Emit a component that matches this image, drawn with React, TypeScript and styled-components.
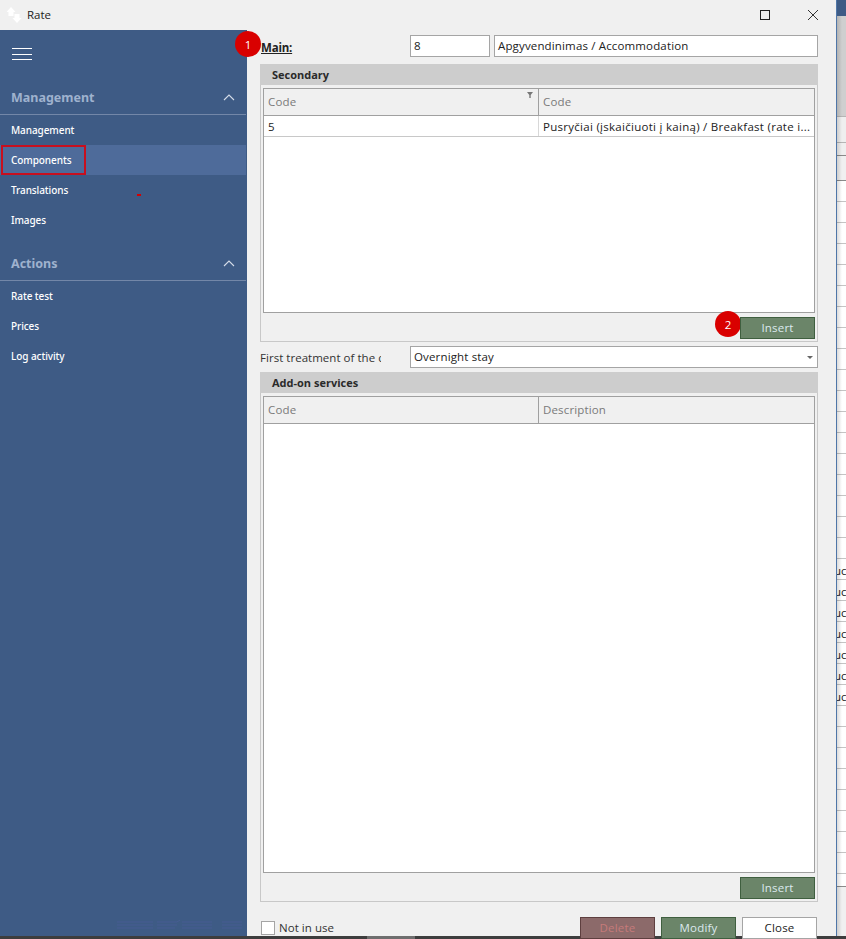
import React from 'react';
import styled, { createGlobalStyle } from 'styled-components';

const Global = createGlobalStyle`
  html, body { margin: 0; padding: 0; background: #f0f0f0; }
  body { font-family: "Open Sans", "Noto Sans", sans-serif; overflow: hidden; }
  * { box-sizing: border-box; }
`;

const Screen = styled.div`
  width: 846px; height: 939px; display: flex; flex-direction: column; overflow: hidden;
`;
const Desktop = styled.div`
  flex: 1; min-height: 0; display: flex;
`;
const Taskbar = styled.div`
  height: 3px; background: #3d3d3d; padding-left: 367px;
`;
const TaskbarThumb = styled.div`
  width: 48px; height: 3px; background: #6e6e6e;
`;
const Dialog = styled.div`
  width: 836px; display: flex; flex-direction: column; background: #f0f0f0;
`;
const TitleBar = styled.div`
  height: 30px; display: flex; align-items: center; padding: 0 0 1px 6px; background: #f0f0f0;
`;
const TitleText = styled.span`
  font-size: 11.5px; color: #222; margin-left: 5px; flex: 1;
`;
const WinButton = styled.button`
  width: 10px; height: 10px; padding: 0; border: 0; background: none; display: block; margin-right: ${p => p.$mr}px;
  svg { display: block; }
`;
const Body = styled.div`
  flex: 1; min-height: 0; display: flex;
`;
const Sidebar = styled.nav`
  position: relative; width: 247px; background: #3e5b85; display: flex; flex-direction: column; flex: none;
  font-family: "Noto Sans", sans-serif;
`;
const Burger = styled.div`
  height: 46px; padding: 18px 0 0 12px; display: flex; flex-direction: column; gap: 4.5px;
  i { display: block; width: 20px; height: 1px; background: #fff; }
`;
const SectionHead = styled.div`
  height: 39px; margin-top: ${p => p.$mt}px; width: 246px; padding: 5px 11px 0 11px; display: flex; align-items: center; justify-content: space-between;
  border-bottom: 1px solid #7387a8; color: #9fb2ce; font-size: 12.5px; font-weight: 700;
`;
const Item = styled.div`
  position: relative; width: 246px; height: 30px; padding: 0 0 1px 11px; display: flex; align-items: center;
  font-size: 10px; font-weight: 500; color: #fff; letter-spacing: -0.08px; background: ${p => (p.$active ? '#4e6b9a' : 'transparent')};
`;
const Highlight = styled.span`
  position: absolute; left: 1px; top: 0; width: 85px; height: 30px; border: 2px solid #c80f1e;
`;
const RedTick = styled.span`
  position: absolute; left: 137px; top: 19px; width: 4px; height: 2px; background: #d40000;
`;
const Watermark = styled.svg`
  position: absolute; left: 116px; bottom: 5px; opacity: .8;
`;
const Main = styled.main`
  position: relative; flex: 1; min-width: 0; display: flex; flex-direction: column; padding: 5px 18px 0 13px; font-size: 11.5px; letter-spacing: .15px; color: #222;
`;
const Badge = styled.span`
  position: absolute; left: ${p => p.$x}px; top: ${p => p.$y}px; width: 26px; height: 26px; border-radius: 50%;
  background: #d90000; color: #fff; font-size: 11.5px; display: flex; align-items: center; justify-content: center;
`;
const FieldRow = styled.div`
  display: flex; align-items: center; height: 22px; margin-top: ${p => p.$mt || 0}px;
`;
const MainLabel = styled.span`
  width: 149px; font-weight: 700; text-decoration: underline; margin: 2px 0 0 1px; font-size: 11.5px; letter-spacing: -.2px;
`;
const ClipLabel = styled.span`
  width: 121px; margin-right: 29px; white-space: nowrap; overflow: hidden; color: #333; letter-spacing: .03px;
`;
const Input = styled.div`
  height: 22px; width: ${p => (p.$w ? p.$w + 'px' : 'auto')}; flex: ${p => (p.$w ? 'none' : '1')}; margin-right: ${p => p.$mr || 0}px;
  background: #fff; border: 1px solid #a5a5a5; padding: 0 3px 1px; display: flex; align-items: center; justify-content: space-between; color: #222;
`;
const Caret = styled.span`
  width: 0; height: 0; border-left: 3px solid transparent; border-right: 3px solid transparent; border-top: 3px solid #666; margin: 1px 1px 0 0;
`;
const Group = styled.section`
  display: flex; flex-direction: column; flex: ${p => (p.$fill ? '1' : 'none')}; height: ${p => p.$h}px; border: 1px solid #c8c8c8; border-top: 0; margin-top: ${p => p.$mt}px;
`;
const GroupHead = styled.div`
  height: 21px; background: #cdcdcd; margin: 0 -1px; padding-left: 12px; display: flex; align-items: center; font-weight: 700; color: #2a2a2a; font-size: 11px; letter-spacing: 0;
`;
const Grid = styled.div`
  flex: 1; min-height: 0; margin: 3px 2px 0; border: 1px solid #a0a0a0; background: #fff; display: flex; flex-direction: column;
`;
const HeaderRow = styled.div`
  display: grid; grid-template-columns: 274px 1fr; height: 27px; background: #f0f0f0; border-bottom: 1px solid #a0a0a0;
`;
const HeaderCell = styled.div`
  position: relative; padding: 0 0 2px 4px; display: flex; align-items: center; color: #7a7a7a; border-left: ${p => (p.$first ? '0' : '1px solid #a0a0a0')};
`;
const FilterIcon = styled.svg`
  position: absolute; right: 5px; top: 3px;
`;
const DataRow = styled.div`
  display: grid; grid-template-columns: 274px 1fr; height: 21px; border-bottom: 1px solid #c8c8c8;
`;
const DataCell = styled.div`
  padding-left: 4px; display: flex; align-items: center; white-space: nowrap; overflow: hidden; color: #222;
  letter-spacing: ${p => (p.$wide ? '.28px' : '.15px')}; border-left: ${p => (p.$first ? '0' : '1px solid #d8d8d8')};
`;
const GroupFoot = styled.div`
  height: 28px; padding: 4px 2px 0 0; display: flex; justify-content: flex-end;
`;
const ActionButton = styled.button`
  position: relative; width: 75px; height: 22px; padding: 0 0 2px; font: inherit; font-size: 11.5px; letter-spacing: .2px; display: flex; align-items: center; justify-content: center;
  border: 1px solid ${p => ({ green: '#3f5f3f', red: '#5e3f3f', plain: '#a5a5a5' }[p.$tone])};
  background: ${p => ({ green: '#6b8569', red: '#8c6a6a', plain: '#fff' }[p.$tone])};
  color: ${p => ({ green: '#dbe9ee', red: '#c67a7a', plain: '#222' }[p.$tone])};
`;
const BottomBar = styled.div`
  height: 34px; padding: 15px 1px 0 1px; display: flex; align-items: flex-start; gap: 6px;
`;
const Check = styled.span`
  width: 14px; height: 14px; margin-top: 4px; background: #fff; border: 1px solid #a5a5a5; flex: none;
`;
const CheckText = styled.span`
  margin: 4px 0 0 -2px; flex: 1; color: #333; line-height: 14px; letter-spacing: .05px;
`;
const Edge = styled.div`
  width: 1px; background: #4f76a8;
`;
const Strip = styled.aside`
  position: relative; flex: 1; display: flex; flex-direction: column; background: #f0f0f0; overflow: hidden;
  &::after { content: ""; position: absolute; inset: 16px 0 0 0; width: 5px; background: linear-gradient(90deg, rgba(0,0,0,.14), rgba(0,0,0,0)); }
`;
const StripTop = styled.div`
  height: 16px; flex: none; background: #3e5b85;
`;
const StripBand = styled.div`
  height: ${p => p.$h}px; flex: none; background: ${p => p.$bg}; border-bottom: 1px solid ${p => p.$line};
`;
const StripRow = styled.div`
  height: 21px; flex: none; background: #fff; border-bottom: 1px solid #c4c4c4; font-size: 11.5px; color: #222; line-height: 20px; white-space: nowrap; overflow: hidden; padding-top: 2px; text-indent: -3px;
`;

const Chevron = () => (
  <svg width="12" height="7" viewBox="0 0 12 7" fill="none"><path d="M1 6l5-5 5 5" stroke="#d5dde9" strokeWidth="1.1" /></svg>
);

const rows = Array.from({ length: 33 }, (_, i) => i);

export default function App() {
  return (
    <Screen>
      <Global />
      <Desktop>
        <Dialog>
          <TitleBar>
            <svg width="16" height="16" viewBox="0 0 16 16" fill="#fff">
              <path d="M5 0l4.500 5H7.500v4h-5V5H.5z" />
              <path d="M11 16l-4.500-5h2V7h5v4h2z" />
            </svg>
            <TitleText>Rate</TitleText>
            <WinButton $mr={38} aria-label="Maximize">
              <svg width="10" height="10" viewBox="0 0 10 10" fill="none"><rect x=".5" y=".5" width="9" height="9" stroke="#222" /></svg>
            </WinButton>
            <WinButton $mr={18} aria-label="Close">
              <svg width="10" height="10" viewBox="0 0 10 10" fill="none"><path d="M0 0l10 10M10 0L0 10" stroke="#333" /></svg>
            </WinButton>
          </TitleBar>
          <Body>
            <Sidebar>
              <Burger><i /><i /><i /></Burger>
              <SectionHead $mt={0}>Management<Chevron /></SectionHead>
              <Item>Management</Item>
              <Item $active>Components<Highlight /></Item>
              <Item>Translations<RedTick /></Item>
              <Item>Images</Item>
              <SectionHead $mt={7}>Actions<Chevron /></SectionHead>
              <Item>Rate test</Item>
              <Item>Prices</Item>
              <Item>Log activity</Item>
              <Watermark width="130" height="12" viewBox="0 0 130 12" fill="none" stroke="#4a5f96">
                <path d="M1 3h36M1 6h36M1 9h36M41 3h20l3-2M41 6h20M41 9h18M66 3h30M66 6h30M66 9h30M106 3h20M106 6h20M106 9h20" />
              </Watermark>
            </Sidebar>
            <Main>
              <Badge $x={-12} $y={1}>1</Badge>
              <Badge $x={468} $y={281}>2</Badge>
              <FieldRow>
                <MainLabel>Main:</MainLabel>
                <Input $w={80} $mr={4}>8</Input>
                <Input>Apgyvendinimas / Accommodation</Input>
              </FieldRow>
              <Group $h={278} $mt={7}>
                <GroupHead>Secondary</GroupHead>
                <Grid>
                  <HeaderRow>
                    <HeaderCell $first>Code
                      <FilterIcon width="6" height="6" viewBox="0 0 6 6" fill="#777"><path d="M0 0h6L3.700 3v3H2.300V3z" /></FilterIcon>
                    </HeaderCell>
                    <HeaderCell>Code</HeaderCell>
                  </HeaderRow>
                  <DataRow>
                    <DataCell $first>5</DataCell>
                    <DataCell $wide>Pusryčiai (įskaičiuoti į kainą) / Breakfast (rate i...</DataCell>
                  </DataRow>
                </Grid>
                <GroupFoot><ActionButton $tone="green">Insert</ActionButton></GroupFoot>
              </Group>
              <FieldRow $mt={4}>
                <ClipLabel>First treatment of the calculation</ClipLabel>
                <Input>Overnight stay<Caret /></Input>
              </FieldRow>
              <Group $fill $mt={4}>
                <GroupHead>Add-on services</GroupHead>
                <Grid>
                  <HeaderRow>
                    <HeaderCell $first>Code</HeaderCell>
                    <HeaderCell>Description</HeaderCell>
                  </HeaderRow>
                </Grid>
                <GroupFoot><ActionButton $tone="green">Insert</ActionButton></GroupFoot>
              </Group>
              <BottomBar>
                <Check />
                <CheckText>Not in use</CheckText>
                <ActionButton $tone="red">Delete</ActionButton>
                <ActionButton $tone="green">Modify</ActionButton>
                <ActionButton $tone="plain">Close</ActionButton>
              </BottomBar>
            </Main>
          </Body>
        </Dialog>
        <Edge />
        <Strip>
          <StripTop />
          <StripBand $h={101} $bg="#cfcfcf" $line="#b5b5b5" />
          <StripBand $h={26} $bg="#efefef" $line="#b5b5b5" />
          <StripBand $h={13} $bg="#efefef" $line="#8a8a8a" />
          <StripBand $h={25} $bg="#f0f0f0" $line="#8a8a8a" />
          {rows.map(i => (
            <StripRow key={i}>{i >= 18 && i <= 24 ? 'uc' : ''}</StripRow>
          ))}
          <StripBand $h={13} $bg="#fff" $line="#8a8a8a" />
        </Strip>
      </Desktop>
      <Taskbar><TaskbarThumb /></Taskbar>
    </Screen>
  );
}
